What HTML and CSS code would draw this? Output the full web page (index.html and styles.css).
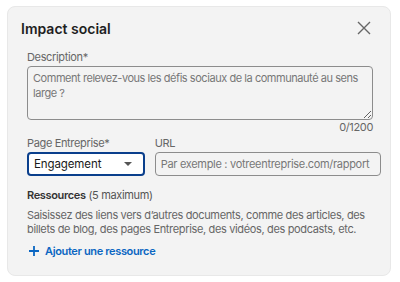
FILE: index.html
```html
<!DOCTYPE html>
<html lang="fr">
<head>
    <meta charset="UTF-8">
    <title>Impact social</title>
    <link rel="stylesheet" href="styles.css">
</head>
<body>

<div class="card">
    <div class="card-head">
        <h2>Impact social</h2>
        <button class="close" aria-label="Fermer">
            <svg width="14" height="14" viewBox="0 0 14 14"><path d="M1 1 L13 13 M13 1 L1 13" stroke="#666" stroke-width="1.4" fill="none"/></svg>
        </button>
    </div>

    <div class="card-body">
        <label class="field-label">Description*</label>
        <textarea class="desc" rows="3" placeholder="Comment relevez-vous les défis sociaux de la communauté au sens large ?"></textarea>
        <div class="counter">0/1200</div>

        <div class="row">
            <div class="col col-page">
                <label class="field-label">Page Entreprise*</label>
                <div class="select">
                    <span>Engagement</span>
                    <span class="caret"></span>
                </div>
            </div>
            <div class="col col-url">
                <label class="field-label">URL</label>
                <input type="text" class="url" placeholder="Par exemple : votreentreprise.com/rapport">
            </div>
        </div>

        <h3 class="res-title"><strong>Ressources</strong> (5 maximum)</h3>
        <p class="res-help">Saisissez des liens vers d’autres documents, comme des articles, des billets de blog, des pages Entreprise, des vidéos, des podcasts, etc.</p>
        <a href="#" class="add-link">
            <svg width="10" height="10" viewBox="0 0 10 10"><path d="M5 0 V10 M0 5 H10" stroke="#0a66c2" stroke-width="1.8" fill="none"/></svg>
            Ajouter une ressource
        </a>
    </div>
</div>

</body>
</html>
```
FILE: styles.css
```css
body {
    font-family: Inter, "Noto Sans", sans-serif;
    background-color: #fff;
    margin: 0;
    padding: 6px 0 0 7px;
}
.card {
    width: 384px;
    height: 270px;
    box-sizing: border-box;
    background: #f3f3f3;
    border: 1px solid #e8e8e8;
    border-radius: 8px;
    padding: 11px 9px 0 13px;
}
.card-head {
    display: flex;
    justify-content: space-between;
    align-items: center;
    height: 20px;
}
.card-head h2 {
    margin: 0;
    font-size: 14px;
    font-weight: 600;
    color: #1f1f1f;
}
.close {
    background: none;
    border: none;
    padding: 0;
    margin-right: 10px;
    width: 14px;
    height: 14px;
    display: flex;
}
.card-body {
    padding-left: 6px;
    letter-spacing: -0.35px;
}
.field-label {
    display: block;
    font-size: 11px;
    color: #666;
    line-height: 14px;
    margin-bottom: 2px;
}
.card-body > .field-label {
    margin-top: 12px;
}
.desc {
    display: block;
    width: 346px;
    height: 54px;
    box-sizing: border-box;
    border: 1px solid #8c8c8c;
    border-radius: 4px;
    background: #f3f3f3;
    padding: 4px 5px;
    font-family: inherit;
    font-size: 11px;
    letter-spacing: -0.45px;
    line-height: 15px;
    color: #333;
    resize: vertical;
}
.desc::placeholder,
.url::placeholder {
    color: #777;
}
.counter {
    width: 346px;
    text-align: right;
    font-size: 11px;
    color: #666;
    line-height: 14px;
}
.row {
    display: flex;
    gap: 10px;
    margin-top: 2px;
}
.col-page {
    width: 118px;
}
.col-url {
    width: 227px;
}
.select {
    height: 24px;
    box-sizing: border-box;
    border: 2px solid #0a3f8c;
    border-radius: 4px;
    background: #fff;
    display: flex;
    align-items: center;
    justify-content: space-between;
    padding: 0 11px 0 5px;
    font-size: 11.5px;
    letter-spacing: -0.1px;
    color: #1a1a1a;
}
.caret {
    width: 0;
    height: 0;
    border-left: 4px solid transparent;
    border-right: 4px solid transparent;
    border-top: 4px solid #555;
}
.url {
    display: block;
    width: 100%;
    height: 24px;
    box-sizing: border-box;
    border: 1px solid #8c8c8c;
    border-radius: 4px;
    background: #f3f3f3;
    padding: 0 5px;
    font-family: inherit;
    font-size: 11px;
    letter-spacing: -0.3px;
}
.res-title {
    margin: 12px 0 0;
    font-size: 11px;
    font-weight: normal;
    color: #555;
    line-height: 14px;
}
.res-title strong {
    font-weight: 600;
    color: #333;
}
.res-help {
    margin: 6px 0 0;
    font-size: 11px;
    line-height: 14px;
    color: #666;
}
.add-link {
    display: inline-flex;
    align-items: center;
    gap: 6px;
    margin-top: 8px;
    padding-left: 2px;
    font-size: 11px;
    line-height: 14px;
    font-weight: 600;
    color: #0a66c2;
    text-decoration: none;
}
```
